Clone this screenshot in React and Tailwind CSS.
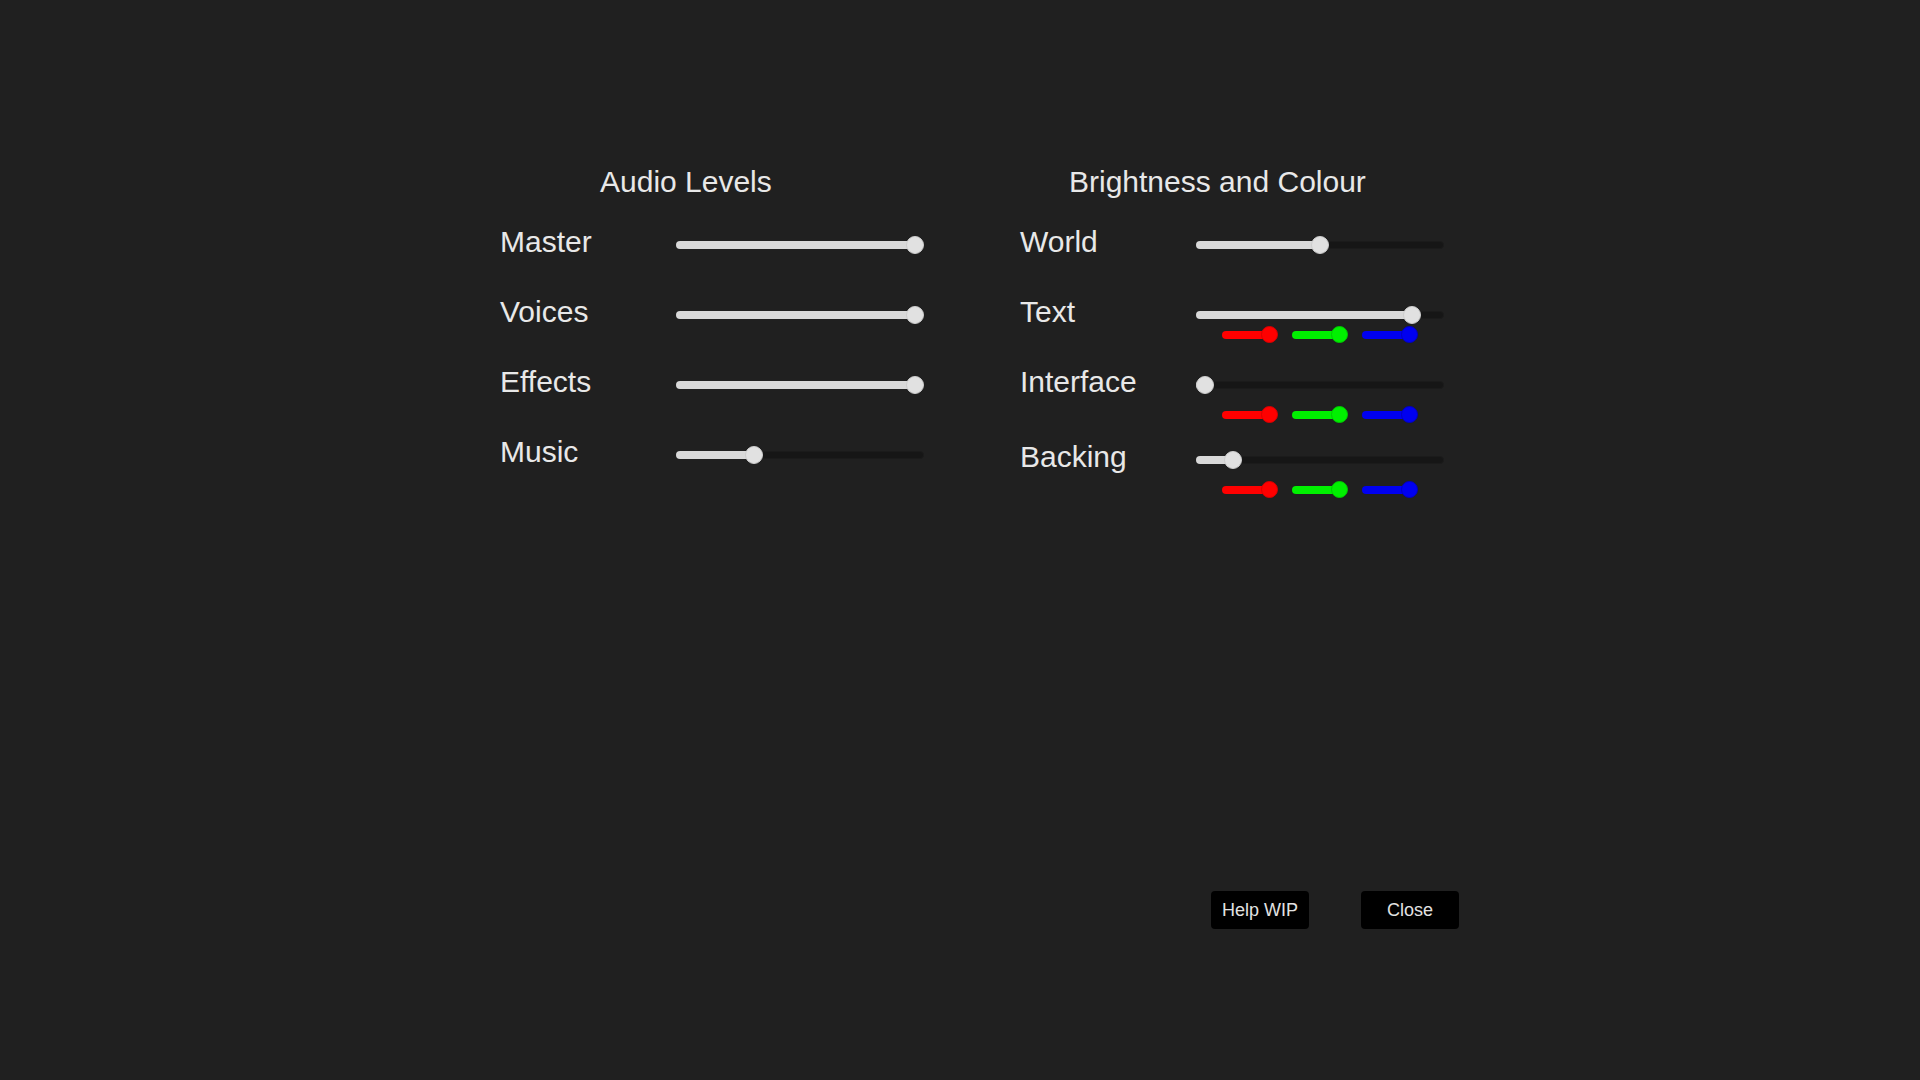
import React from 'react';

const AUDIO = [
  { label: 'Master', value: 1 },
  { label: 'Voices', value: 1 },
  { label: 'Effects', value: 1 },
  { label: 'Music', value: 0.3 },
];

// rowH / rgbGap differ a little per row in the original, kept as-is
const DISPLAY = [
  { label: 'World', value: 0.5, rowH: 'h-[70px]' },
  { label: 'Text', value: 0.9, rowH: 'h-[70px]', rgb: true, rgbGap: 'mt-[2px]' },
  { label: 'Interface', value: 0, rowH: 'h-[75px]', rgb: true, rgbGap: 'mt-[12px]' },
  { label: 'Backing', value: 0.12, rowH: 'h-[70px]', rgb: true, rgbGap: 'mt-[12px]' },
];

const CHANNELS = [
  { fill: 'bg-[#ff0000]', thumb: 'bg-[#ff0000] border-[#d80000]' },
  { fill: 'bg-[#00f000]', thumb: 'bg-[#00f000] border-[#00c800]' },
  { fill: 'bg-[#0000f0]', thumb: 'bg-[#0000f0] border-[#0000c0]' },
];

const Slider = ({ value, width, size, fill, thumb }) => {
  const left = value * (width - size);
  return (
    <div className="relative shrink-0" style={{ width, height: size }}>
      <div className="absolute left-0 right-0 top-1/2 h-[8px] -translate-y-1/2 rounded-full bg-[#161616] border border-[#1b1b1b]" />
      <div
        className={`absolute left-0 top-1/2 h-[8px] -translate-y-1/2 rounded-full ${fill}`}
        style={{ width: left + size / 2 }}
      />
      <div
        className={`absolute top-0 rounded-full border ${thumb}`}
        style={{ left, width: size, height: size }}
      />
    </div>
  );
};

const MainSlider = ({ value }) => (
  <Slider value={value} width={248} size={18} fill="bg-[#d9d9d9]" thumb="bg-[#e1e1e1] border-[#cdcdcd]" />
);

const Label = ({ children }) => (
  <div className="w-[176px] shrink-0 text-[30px] leading-[30px] text-[#e8e8e8]">{children}</div>
);

export default function App() {
  return (
    <div className="min-h-screen w-full bg-[#202020] font-['Liberation_Sans',Arial,sans-serif] text-[#e8e8e8] pt-[167px]">
      <div className="flex h-[724px] items-start pl-[500px] gap-[96px]">
        {/* Audio */}
        <div className="w-[424px]">
          <h2 className="pl-[100px] text-[30px] leading-[30px] font-normal">Audio Levels</h2>
          <div className="mt-[30px] flex flex-col">
            {AUDIO.map(row => (
              <div key={row.label} className="flex h-[70px] items-start">
                <Label>{row.label}</Label>
                <div className="mt-[9px]">
                  <MainSlider value={row.value} />
                </div>
              </div>
            ))}
          </div>
        </div>

        {/* Brightness */}
        <div className="w-[424px]">
          <h2 className="pl-[49px] text-[30px] leading-[30px] font-normal">Brightness and Colour</h2>
          <div className="mt-[30px] flex flex-col">
            {DISPLAY.map(row => (
              <div key={row.label} className={`flex items-start ${row.rowH}`}>
                <Label>{row.label}</Label>
                <div className="mt-[9px] flex flex-col">
                  <MainSlider value={row.value} />
                  {row.rgb && (
                    <div className={`flex justify-center gap-[14px] ${row.rgbGap}`}>
                      {CHANNELS.map((c, i) => (
                        <Slider key={i} value={1} width={56} size={17} fill={c.fill} thumb={c.thumb} />
                      ))}
                    </div>
                  )}
                </div>
              </div>
            ))}
          </div>
        </div>
      </div>

      {/* Buttons */}
      <div className="flex pl-[1211px] gap-[52px]">
        <button className="w-[98px] h-[38px] rounded-[4px] bg-black text-[18px] text-[#e2e2e2]">Help WIP</button>
        <button className="w-[98px] h-[38px] rounded-[4px] bg-black text-[18px] text-[#e2e2e2]">Close</button>
      </div>
    </div>
  );
}
